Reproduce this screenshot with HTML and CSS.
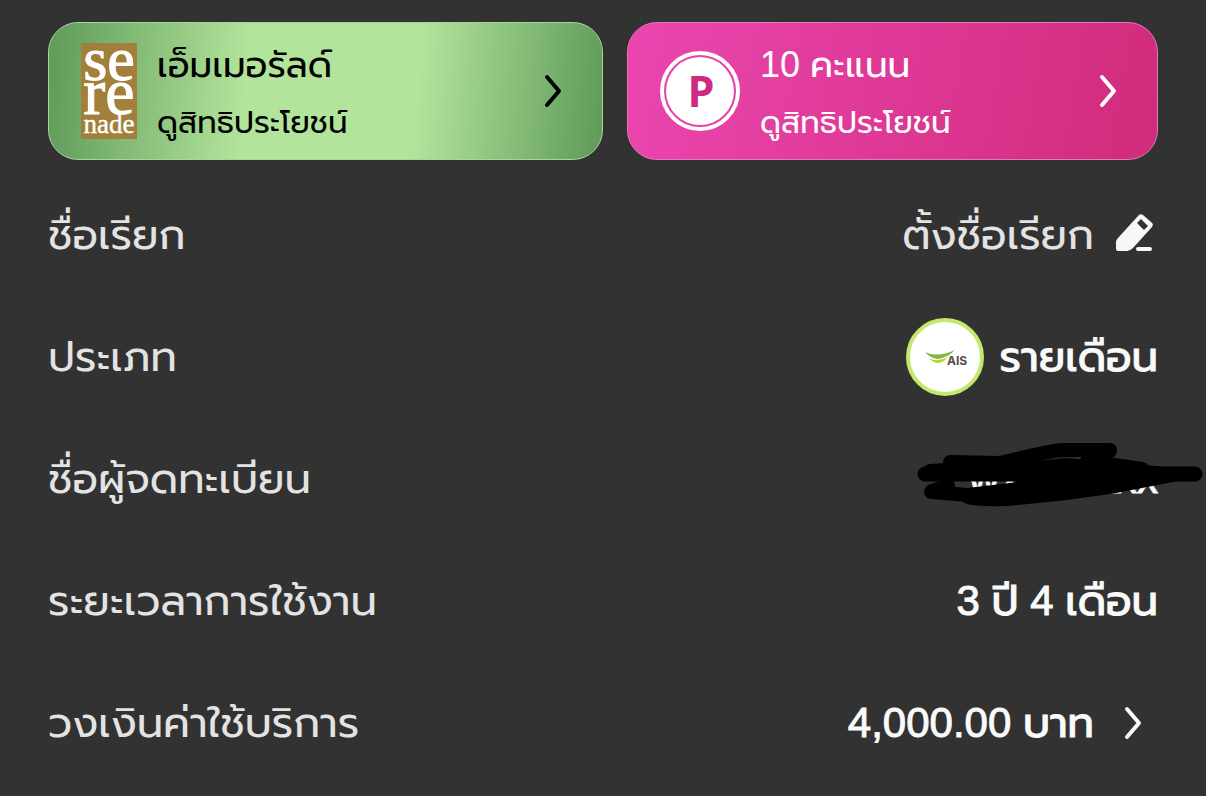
FILE: index.html
```html
<!DOCTYPE html>
<html lang="th">
  <head>
    <meta charset="utf-8">
    <title>เอ็มเมอรัลด์</title>
    <link rel="stylesheet" href="styles.css">
  </head>
  <body>
    <main class="account">
      <div class="cards">
        <a class="card card-serenade" href="#">
          <svg class="serenade-logo" viewBox="0 0 56 96" aria-hidden="true">
            <rect width="56" height="96" fill="#a27f3b" />
            <g fill="#fff" stroke="#fff" font-family="Liberation Serif, serif" text-anchor="middle">
              <text x="28" y="37" font-size="62" stroke-width="1">se</text>
              <text x="28" y="71" font-size="66" stroke-width="1">re</text>
              <text x="28" y="90" font-size="27" stroke-width="0.4">nade</text>
            </g>
          </svg>
          <span class="card-text">
            <span class="card-title">เอ็มเมอรัลด์</span>
            <span class="card-sub">ดูสิทธิประโยชน์</span>
          </span>
          <svg class="chevron" viewBox="0 0 48 48" aria-hidden="true">
            <path d="M17 10 29 24 17 38" />
          </svg>
        </a>
        <a class="card card-points" href="#">
          <svg class="points-logo" viewBox="0 0 80 80" aria-hidden="true">
            <circle cx="40" cy="40" r="38" fill="none" stroke="#fff" stroke-width="4" />
            <circle cx="40" cy="40" r="34" fill="#fff" />
            <text x="41" y="56" text-anchor="middle" font-size="43" font-weight="700" font-family="Open Sans, sans-serif" fill="#cd2b82">P</text>
          </svg>
          <span class="card-text">
            <span class="card-title">10 คะแนน</span>
            <span class="card-sub">ดูสิทธิประโยชน์</span>
          </span>
          <svg class="chevron" viewBox="0 0 48 48" aria-hidden="true">
            <path d="M17 10 29 24 17 38" />
          </svg>
        </a>
      </div>

      <dl class="details">
        <div class="row">
          <dt>ชื่อเรียก</dt>
          <dd>
            <a class="value-link nickname" href="#">
              ตั้งชื่อเรียก
              <svg class="edit-icon" viewBox="0 0 48 48" aria-hidden="true">
                <path fill="#f7f7f7" fill-rule="evenodd" d="M6 38V31Q6 29 8 27L28 5Q30 2 33 4L41 11Q44 13 42 16L23 37Q20 40 17 40H8Q6 40 6 38ZM31 8 27 12 34 19 38 15Z" />
                <path d="M28 38H40" stroke="#f7f7f7" stroke-width="4" stroke-linecap="round" />
              </svg>
            </a>
          </dd>
        </div>
        <div class="row">
          <dt>ประเภท</dt>
          <dd>
            <svg class="ais-logo" viewBox="0 0 78 78" aria-hidden="true">
              <circle cx="39" cy="39" r="37" fill="#fff" stroke="#c4e86b" stroke-width="4" />
              <path d="M19 34Q31 40 49 32Q41 40 32 41Q25 41 19 34Z" fill="#83b747" />
              <path d="M23 40Q31 45 42 39Q37 45 31 45Q26 44 23 40Z" fill="#b4d334" />
              <text x="41" y="47" font-size="12" font-weight="700" font-family="Inter, sans-serif" fill="#5b4d49">AIS</text>
            </svg>
            <span>รายเดือน</span>
          </dd>
        </div>
        <div class="row">
          <dt>ชื่อผู้จดทะเบียน</dt>
          <dd class="owner">
            <span>wxxxx xxx</span>
            <svg class="scribble" viewBox="0 0 290 68" aria-hidden="true">
              <g fill="none" stroke="#000" stroke-width="14" stroke-linecap="round" stroke-linejoin="round">
                <path d="M34 19 84 20Q140 6 150 7H194" />
                <path d="M194 8 171 18 226 26" />
                <path d="M14 28 84 24" />
                <path d="M9 31H279" stroke-width="15" />
                <path d="M15 49 52 52 110 45" />
                <path d="M16 48 32 43" />
                <path d="M52 54Q60 57 92 56L150 50 200 43 257 32" />
              </g>
              <path d="M100 20 150 15 210 20 250 24 270 30 200 46 150 52 100 57Z" />
            </svg>
          </dd>
        </div>
        <div class="row">
          <dt>ระยะเวลาการใช้งาน</dt>
          <dd>3 ปี 4 เดือน</dd>
        </div>
        <div class="row">
          <dt>วงเงินค่าใช้บริการ</dt>
          <dd>
            <a class="value-link" href="#">
              4,000.00 บาท
              <svg class="chevron" viewBox="0 0 48 48" aria-hidden="true">
                <path d="M17 10 29 24 17 38" />
              </svg>
            </a>
          </dd>
        </div>
      </dl>
    </main>
  </body>
</html>
```

FILE: styles.css
```css
* {
  box-sizing: border-box;
}

body {
  margin: 0;
  background-color: #323232;
  color: #fafafa;
  font-family: "Liberation Sans", "Prompt", "Kanit", "Noto Sans Thai", sans-serif;
}

a {
  color: inherit;
  text-decoration: none;
}

.account {
  padding: 22px 48px 0;
}

.cards {
  display: grid;
  grid-template-columns: 555fr 531fr;
  gap: 24px;
}

.card {
  display: flex;
  align-items: center;
  height: 138px;
  padding: 0 24px 0 32px;
  border: 1px solid;
  border-radius: 30px;
}

.card-serenade {
  color: #000;
  border-color: #a5d69a;
  background: linear-gradient(95deg, #5e9a59 0%, #b3e49c 36%, #b3e49c 66%, #5e9a59 100%) border-box;
}

.card-points {
  color: #fff;
  border-color: #e678b8;
  background: linear-gradient(100deg, #eb46b0, #d12b7b) border-box;
}

.card-text {
  display: flex;
  flex: 1;
  flex-direction: column;
  padding-top: 6px;
}

.card-title {
  font-size: 36px;
  line-height: 58px;
}

.card-sub {
  font-size: 31px;
  line-height: 58px;
}

.serenade-logo {
  width: 56px;
  height: 96px;
  margin-right: 20px;
  overflow: visible;
}

.points-logo {
  width: 80px;
  height: 80px;
  margin-right: 20px;
}

.chevron {
  width: 48px;
  height: 48px;
  fill: none;
  stroke: currentColor;
  stroke-width: 4px;
  stroke-linecap: round;
  stroke-linejoin: round;
}

/* Account details */
.details {
  margin: 14px 0 0;
}

.row {
  display: flex;
  align-items: center;
  justify-content: space-between;
  height: 122px;
  font-size: 42px;
}

dt {
  color: #e3e3e3;
}

dd {
  position: relative;
  display: flex;
  align-items: center;
  gap: 16px;
  margin: 0;
  -webkit-text-stroke: 1px currentColor;
}

.value-link {
  display: flex;
  align-items: center;
  gap: 16px;
}

.nickname {
  color: #e3e3e3;
  -webkit-text-stroke: 0;
}

.edit-icon {
  width: 48px;
  height: 48px;
}

.ais-logo {
  width: 78px;
  height: 78px;
  -webkit-text-stroke: 0;
}

/* Hides the owner's name */
.scribble {
  position: absolute;
  right: -48px;
  top: -12px;
  width: 290px;
  height: 68px;
}
```
